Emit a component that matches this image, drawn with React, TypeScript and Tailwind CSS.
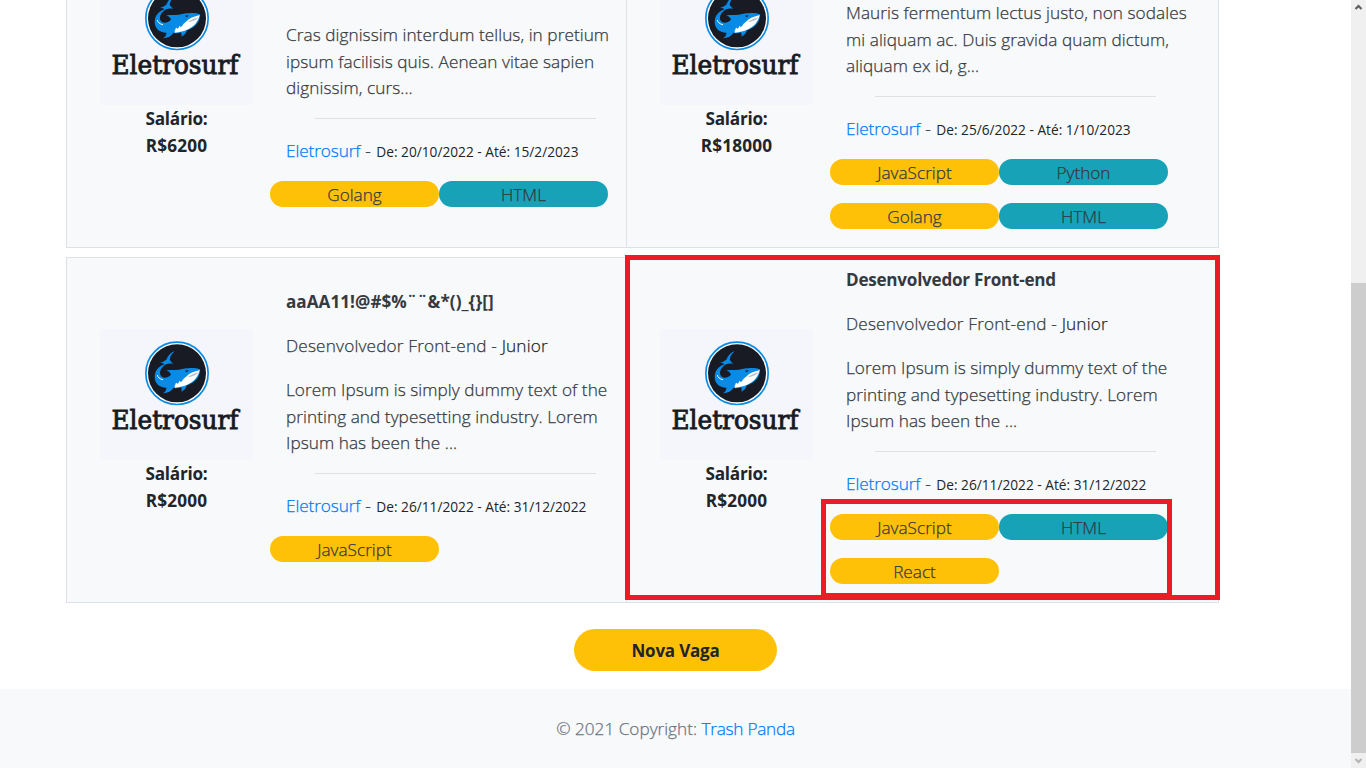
import type { ReactNode } from "react";

function Logo() {
  return (
    <svg width="153" height="131" viewBox="0 0 153 131" className="block shrink-0">
      <rect width="153" height="131" rx="4" fill="#f4f6fc" />
      <g transform="translate(-10 -9) scale(0.33333)">
        <circle cx="261" cy="160" r="93.5" fill="#fff" stroke="#078be6" strokeWidth="5" />
        <circle cx="261" cy="160" r="87" fill="#181b23" />
        <path
          d="M255 93C242 97 234 106 229 119C223 124 216 127 210 127C216 129 221 131 224 133C205 139 195 152 194 170C194 190 208 202 229 203C230 211 225 216 219 220C234 219 244 213 251 203C258 206 266 205 273 202C275 207 276 211 274 215C283 211 288 204 291 196C309 189 321 180 326 167C330 160 331 153 330 148C319 144 307 143 296 145C289 144 283 145 277 147C262 151 246 149 229 151C236 154 241 158 243 164C235 172 224 176 216 171C205 163 209 144 228 133C236 130 243 130 250 132C245 127 240 123 239 118C241 107 247 99 255 93Z"
          fill="#078be6"
        />
        <path
          d="M329 150C326 164 319 176 306 186C292 196 273 202 255 203C252 199 256 194 258 188L264 191L269 182L273 187L281 176C289 172 292 164 301 160C310 155 320 154 329 150Z"
          fill="#fff"
        />
        <path d="M294 170C305 166 311 160 325 157C320 166 309 167 301 171Z" fill="#b9bdc6" />
        <path d="M202 165C203 172 209 177 219 179" fill="none" stroke="#fff" strokeWidth="3" />
        <path d="M284 152L296 151L291 157Z" fill="#181b23" />
      </g>
      <text
        x="11.5"
        y="99.5"
        textLength="127"
        lengthAdjust="spacingAndGlyphs"
        fontFamily="'DejaVu Serif', serif"
        fontSize="25.5"
        fill="#181b23"
        stroke="#181b23"
        strokeWidth="0.9"
      >
        Eletrosurf
      </text>
    </svg>
  );
}

function Pill({ children, blue = false }: { children: ReactNode; blue?: boolean }) {
  return (
    <span
      className={`mb-[18px] h-[26px] w-[169px] rounded-full text-center leading-[27px] text-[#343a40] ${blue ? "bg-[#17a2b8]" : "bg-[#ffc107]"}`}
    >
      {children}
    </span>
  );
}

type Job = {
  title?: string;
  level?: string;
  lines: string[];
  salary: string;
  from: string;
  to: string;
  tags: string[];
};

function JobCard({ job, side, row }: { job: Job; side: "left" | "right"; row: 1 | 2 }) {
  const short = job.tags.length < 3;
  return (
    <article
      className={`flex items-end border-b border-l border-[#dee2e6] bg-[#f8f9fb] ${side === "left" ? "w-[560px]" : "w-[593px] border-r"} ${row === 1 ? "h-[248px]" : "h-[346px] border-t"}`}
    >
      <div className="ml-[33px] flex w-[153px] flex-col items-center pb-[88px]">
        <Logo />
        <div className="h-[54px] pt-px text-center text-[17.2px] leading-[26.6px] font-bold tracking-[-0.25px] text-[#212529] [-webkit-text-stroke:0]">
          <p>Salário:</p>
          <p className="tracking-[0.15px]">{job.salary}</p>
        </div>
      </div>
      <div className={`ml-[17px] w-[340px] ${short ? "pb-[22px]" : ""}`}>
        <div className="pl-4 whitespace-nowrap">
          {job.title && (
            <h2
              className={`mb-[17px] h-[27px] text-[17.1px] leading-[28px] font-bold [-webkit-text-stroke:0] ${job.title.includes("@") ? "tracking-[0.05px]" : "tracking-[-0.25px]"}`}
            >
              {job.title}
            </h2>
          )}
          {job.level && (
            <p className="mb-[18px] h-[26px] leading-[27px] tracking-[0.18px]">
              Desenvolvedor Front-end - <span className="text-[#212529]">{job.level}</span>
            </p>
          )}
          <div className="relative top-px leading-[26.6px] tracking-[0.06px]">
            {job.lines.map((l) => (
              <p key={l}>{l}</p>
            ))}
          </div>
          <hr className="mt-[17px] ml-[29px] w-[281px] border-[#dee2e6]" />
          <p className="mt-[19px] mb-[17px] h-[26px] leading-[26px]">
            <a className="tracking-[-0.1px] text-[#007bff]">Eletrosurf</a>
            <span className="tracking-[0.5px]"> - </span>
            <span className="text-[13.7px] font-normal text-[#212529] [-webkit-text-stroke:0]">
              De: {job.from} - Até: {job.to}
            </span>
          </p>
        </div>
        <div className="flex flex-wrap">
          {job.tags.map((t, i) => (
            <Pill key={t} blue={i % 2 === 1}>
              {t}
            </Pill>
          ))}
        </div>
      </div>
    </article>
  );
}

const jobs: Job[] = [
  {
    lines: ["Cras dignissim interdum tellus, in pretium", "ipsum facilisis quis. Aenean vitae sapien", "dignissim, curs..."],
    salary: "R$6200",
    from: "20/10/2022",
    to: "15/2/2023",
    tags: ["Golang", "HTML"],
  },
  {
    lines: ["Mauris fermentum lectus justo, non sodales", "mi aliquam ac. Duis gravida quam dictum,", "aliquam ex id, g..."],
    salary: "R$18000",
    from: "25/6/2022",
    to: "1/10/2023",
    tags: ["JavaScript", "Python", "Golang", "HTML"],
  },
  {
    title: "aaAA11!@#$%¨¨&*()_{}[]",
    level: "Junior",
    lines: ["Lorem Ipsum is simply dummy text of the", "printing and typesetting industry. Lorem", "Ipsum has been the ..."],
    salary: "R$2000",
    from: "26/11/2022",
    to: "31/12/2022",
    tags: ["JavaScript"],
  },
  {
    title: "Desenvolvedor Front-end",
    level: "Junior",
    lines: ["Lorem Ipsum is simply dummy text of the", "printing and typesetting industry. Lorem", "Ipsum has been the ..."],
    salary: "R$2000",
    from: "26/11/2022",
    to: "31/12/2022",
    tags: ["JavaScript", "HTML", "React"],
  },
];

export default function App() {
  return (
    <div className="relative flex h-[768px] w-[1366px] overflow-hidden bg-white font-['Open_Sans',sans-serif] text-[17.2px] font-light text-[#343a40] [-webkit-text-stroke:0.25px]">
      <div className="flex w-[1351px] flex-col">
        <main className="flex flex-col pl-[66px]">
          <div className="flex h-[248px] items-end">
            <JobCard job={jobs[0]} side="left" row={1} />
            <JobCard job={jobs[1]} side="right" row={1} />
          </div>
          <div className="mt-[9px] flex">
            <JobCard job={jobs[2]} side="left" row={2} />
            <JobCard job={jobs[3]} side="right" row={2} />
          </div>
        </main>
        <button className="mt-[26px] ml-[574px] h-[42px] w-[203px] rounded-full bg-[#ffc107] pt-px text-[17px] font-bold tracking-[-0.2px] text-[#212529] [-webkit-text-stroke:0]">
          Nova Vaga
        </button>
        <footer className="mt-[18px] flex flex-1 items-center justify-center bg-[#f8f9fb] pt-px text-[#6c757d]">
          <p>
            © 2021 Copyright: <a className="tracking-[-0.25px] text-[#007bff]">Trash Panda</a>
          </p>
        </footer>
      </div>
      <div className="flex w-[15px] flex-col items-center justify-between bg-[#f0f0f0]">
        <svg width="15" height="15" viewBox="0 0 15 15">
          <path d="M4.5 9L7.5 6L10.5 9" fill="none" stroke="#606060" strokeWidth="2.2" />
        </svg>
        <div className="flex w-full flex-col">
          <div className="h-[470px] w-full bg-[#cdcdcd]" />
          <svg width="15" height="15" viewBox="0 0 15 15">
            <path d="M4.5 6L7.5 9L10.5 6" fill="none" stroke="#b5b5b5" strokeWidth="2.2" />
          </svg>
        </div>
      </div>
      <div className="absolute top-[255px] left-[625px] h-[345px] w-[595px] border-5 border-[#ed1c24]" />
      <div className="absolute top-[499px] left-[821px] h-[99px] w-[351px] border-5 border-[#ed1c24]" />
    </div>
  );
}
